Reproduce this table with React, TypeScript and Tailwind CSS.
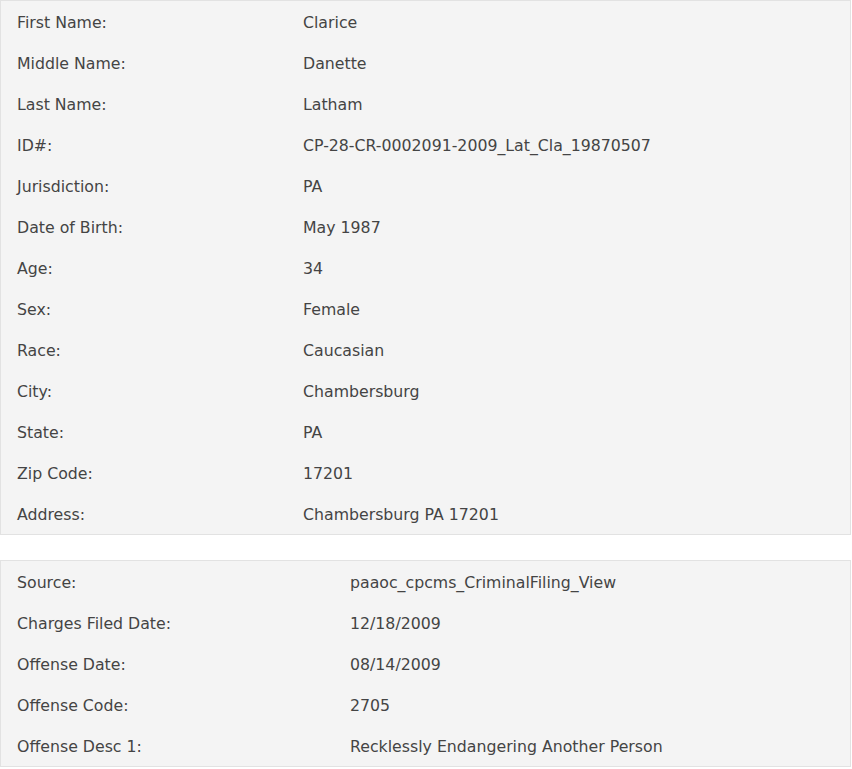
const person: [string, string][] = [
  ['First Name:', 'Clarice'],
  ['Middle Name:', 'Danette'],
  ['Last Name:', 'Latham'],
  ['ID#:', 'CP-28-CR-0002091-2009_Lat_Cla_19870507'],
  ['Jurisdiction:', 'PA'],
  ['Date of Birth:', 'May 1987'],
  ['Age:', '34'],
  ['Sex:', 'Female'],
  ['Race:', 'Caucasian'],
  ['City:', 'Chambersburg'],
  ['State:', 'PA'],
  ['Zip Code:', '17201'],
  ['Address:', 'Chambersburg PA 17201'],
]

const filing: [string, string][] = [
  ['Source:', 'paaoc_cpcms_CriminalFiling_View'],
  ['Charges Filed Date:', '12/18/2009'],
  ['Offense Date:', '08/14/2009'],
  ['Offense Code:', '2705'],
  ['Offense Desc 1:', 'Recklessly Endangering Another Person'],
]

function Panel({ rows, labelWidth }: { rows: [string, string][]; labelWidth: string }) {
  return (
    <div className="w-[851px] border border-[#e2e2e2] bg-[#f4f4f4]">
      {rows.map(([label, value]) => (
        <div key={label} className="flex h-[41px] items-center pl-4 pt-[2px]">
          <div className={`${labelWidth} shrink-0`}>{label}</div>
          <div>{value}</div>
        </div>
      ))}
    </div>
  )
}

export default function App() {
  return (
    <div
      className="min-h-[769px] bg-white text-[15.75px] text-[#444444]"
      style={{ fontFamily: '"DejaVu Sans", sans-serif' }}
    >
      <Panel rows={person} labelWidth="w-[286px]" />
      <div className="mt-[25px]">
        <Panel rows={filing} labelWidth="w-[333px]" />
      </div>
    </div>
  )
}
